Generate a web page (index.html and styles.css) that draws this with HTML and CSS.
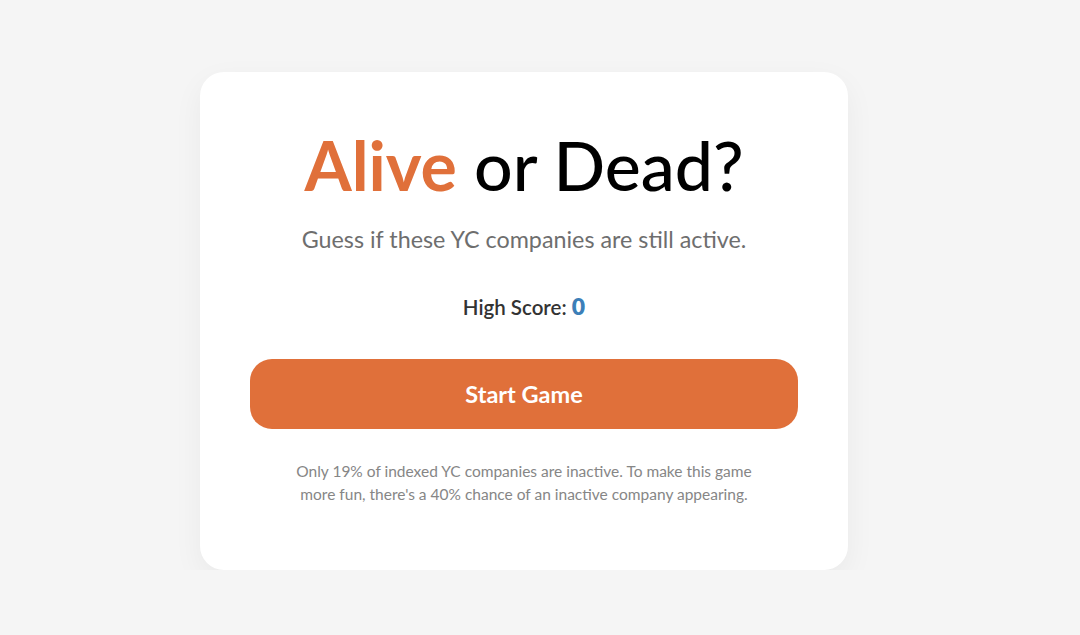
FILE: index.html
```html
<!DOCTYPE html>
<html>
<head>
  <title>Alive or Dead?</title>
  <link rel="stylesheet" href="styles.css">
</head>
<body>
  <div class="container">
    <h1 class="title"><span class="alive">Alive</span> or Dead?</h1>

    <p class="subtitle">Guess if these YC companies are still active.</p>

    <p class="high-score">High Score: <span class="score-value">0</span></p>

    <button id="startButton" class="button">Start Game</button>

    <p class="note">Only 19% of indexed YC companies are inactive. To make this game more fun, there's a 40% chance of an inactive company appearing.</p>
  </div>
</body>
</html>
```

FILE: styles.css
```css
body {
  font-family: "Lato", "Noto Sans", sans-serif;
  background-color: #f5f5f5;
  margin: 0;
  padding: 72px 32px 0 0;
}

.container {
  width: 548px;
  height: 398px;
  margin: 0 auto;
  background-color: #ffffff;
  border-radius: 24px;
  padding: 50px;
  box-shadow: 0 10px 30px rgba(0, 0, 0, 0.05);
  display: flex;
  flex-direction: column;
  align-items: stretch;
  text-align: center;
}

.title {
  font-size: 68px;
  font-weight: 500;
  color: #000000;
  margin: 0;
  line-height: 86px;
}

.alive {
  color: #e0703a;
  font-weight: 700;
}

.subtitle {
  font-size: 23.3px;
  color: #6e6e6e;
  margin: 17px 0 0;
  line-height: 28px;
}

.high-score {
  font-size: 20.5px;
  font-weight: 600;
  color: #333333;
  margin: 39px 0 0;
  line-height: 28px;
}

.score-value {
  color: #3c7fb8;
  font-weight: 800;
  font-size: 23px;
}

.button {
  height: 70px;
  margin-top: 38px;
  background-color: #e0703a;
  color: #ffffff;
  border: none;
  border-radius: 22px;
  font-family: inherit;
  font-size: 23.5px;
  font-weight: 700;
  cursor: pointer;
}

.note {
  font-size: 15.5px;
  color: #868686;
  margin: 31px auto 0;
  max-width: 480px;
  line-height: 23px;
}
```
